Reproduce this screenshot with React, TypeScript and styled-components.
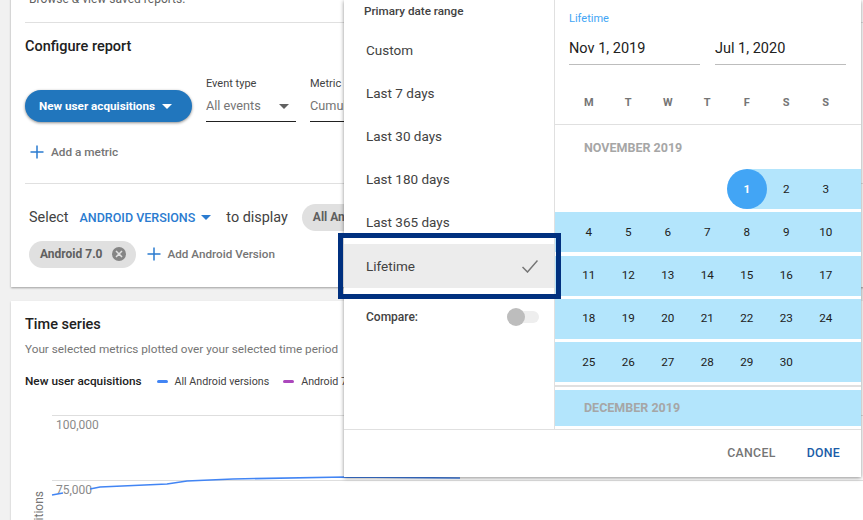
import React from "react";
import styled, { createGlobalStyle } from "styled-components";

const WEEKDAYS = ["M", "T", "W", "T", "F", "S", "S"];
const RANGES = ["Custom", "Last 7 days", "Last 30 days", "Last 180 days", "Last 365 days"];
const WEEKS = [
  [null, null, null, null, 1, 2, 3],
  [4, 5, 6, 7, 8, 9, 10],
  [11, 12, 13, 14, 15, 16, 17],
  [18, 19, 20, 21, 22, 23, 24],
  [25, 26, 27, 28, 29, 30, null],
];

const GlobalStyle = createGlobalStyle`
  html, body {
    margin: 0;
    background: #f1f1f1;
    font-family: Roboto, "Liberation Sans", sans-serif;
  }
`;

const PlusIcon = () => (
  <svg width="14" height="14" viewBox="0 0 14 14" fill="none" stroke="#2a7bd0" strokeWidth="1.5">
    <path d="M7 0.5v13M0.5 7h13" />
  </svg>
);

const Caret: React.FC<{ color: string }> = ({ color }) => (
  <svg width="10" height="5" viewBox="0 0 10 5" fill={color}>
    <path d="M0 0h10L5 5z" />
  </svg>
);

const App: React.FC = () => {
  return (
    <Page>
      <GlobalStyle />
      <TopCard>
        <Intro>Browse &amp; view saved reports.</Intro>
        <CardTitleRow>Configure report</CardTitleRow>
        <MetricRow>
          <MetricButton>
            New user acquisitions
            <Caret color="#ffffff" />
          </MetricButton>
          <Field $width={90}>
            <FieldLabel>Event type</FieldLabel>
            <FieldValue>
              All events
              <Caret color="#616161" />
            </FieldValue>
          </Field>
          <Field $width={120}>
            <FieldLabel>Metric</FieldLabel>
            <FieldValue>Cumulative</FieldValue>
          </Field>
        </MetricRow>
        <AddMetric>
          <PlusIcon />
          Add a metric
        </AddMetric>
        <SectionLine />
        <SelectRow>
          <SelectWord>Select</SelectWord>
          <SelectLink>
            ANDROID VERSIONS
            <Caret color="#2a7bd0" />
          </SelectLink>
          <SelectWord>to display</SelectWord>
          <Chip $marginLeft={14}>All Android versions</Chip>
        </SelectRow>
        <ChipRow>
          <Chip>
            Android 7.0
            <svg width="14" height="14" viewBox="0 0 14 14">
              <circle cx="7" cy="7" r="7" fill="#858585" />
              <path d="M4 4l6 6M10 4l-6 6" stroke="#e0e0e0" strokeWidth="1.5" />
            </svg>
          </Chip>
          <AddVersion>
            <PlusIcon />
            Add Android Version
          </AddVersion>
        </ChipRow>
      </TopCard>

      <ChartCard>
        <ChartTitle>Time series</ChartTitle>
        <ChartSubtitle>Your selected metrics plotted over your selected time period</ChartSubtitle>
        <Legend>
          <LegendName>New user acquisitions</LegendName>
          <LegendItem>
            <LegendDash $color="#4285f4" />
            All Android versions
          </LegendItem>
          <LegendItem>
            <LegendDash $color="#ab47bc" />
            Android 7.0
          </LegendItem>
        </Legend>
        <Chart>
          <AxisLabel>New user acquisitions</AxisLabel>
          <GridRow>
            <GridValue>100,000</GridValue>
          </GridRow>
          <GridRow>
            <GridValue>75,000</GridValue>
          </GridRow>
          <ChartLine width="500" height="80" viewBox="0 0 500 80" fill="none" stroke="#4285f4" strokeWidth="1.5">
            <path d="M0 80L11 78" />
            <path d="M38 74L48 72L115 69L135 66L181 64L293 62L408 63" />
          </ChartLine>
        </Chart>
      </ChartCard>

      <Popup>
        <PopupBody>
          <Menu>
            <MenuTitle>Primary date range</MenuTitle>
            {RANGES.map((range) => (
              <MenuItem key={range}>{range}</MenuItem>
            ))}
            <SelectedItem>
              Lifetime
              <svg width="16" height="13" viewBox="0 0 16 13" fill="none" stroke="#757575" strokeWidth="1.5">
                <path d="M0.5 7L5.5 12L15.5 0.5" />
              </svg>
              <Highlight />
            </SelectedItem>
            <CompareRow>
              Compare:
              <Toggle>
                <ToggleThumb />
              </Toggle>
            </CompareRow>
          </Menu>
          <Calendar>
            <CalendarHead>
              <RangeName>Lifetime</RangeName>
              <Dates>
                <DateField>Nov 1, 2019</DateField>
                <DateField>Jul 1, 2020</DateField>
              </Dates>
            </CalendarHead>
            <Weekdays>
              {WEEKDAYS.map((day, i) => (
                <Weekday key={i}>{day}</Weekday>
              ))}
            </Weekdays>
            <MonthName>NOVEMBER 2019</MonthName>
            <Weeks>
              {WEEKS.map((week, w) => (
                <Week key={w} $bandFrom={w === 0 ? 192 : 0}>
                  {week.map((day, d) =>
                    day === 1 ? (
                      <Day key={d}>
                        <StartDay>{day}</StartDay>
                      </Day>
                    ) : (
                      <Day key={d}>{day}</Day>
                    )
                  )}
                </Week>
              ))}
            </Weeks>
            <MonthLine />
            <NextMonth>DECEMBER 2019</NextMonth>
          </Calendar>
        </PopupBody>
        <PopupFooter>
          <FooterButton $color="#757575">CANCEL</FooterButton>
          <FooterButton $color="#1a5ca8">DONE</FooterButton>
        </PopupFooter>
      </Popup>
    </Page>
  );
};

const Page = styled.div`
  position: relative;
  width: 863px;
  height: 520px;
  overflow: hidden;
  background: #f1f1f1;
  color: #212121;
`;

const TopCard = styled.section`
  margin: -19px 0 0 11px;
  width: 900px;
  height: 306px;
  box-sizing: border-box;
  padding: 0 14px;
  background: #fff;
  box-shadow: 0 1px 2px rgba(0, 0, 0, 0.35);
`;

const Intro = styled.div`
  height: 42px;
  box-sizing: border-box;
  padding: 10px 0 0 4px;
  font-size: 12px;
  line-height: 16px;
  color: #616161;
  border-bottom: 1px solid #e0e0e0;
`;

const CardTitleRow = styled.h2`
  margin: 0;
  height: 46px;
  display: flex;
  align-items: center;
  font-size: 14.5px;
  font-weight: 500;
  color: #212121;
`;

const MetricRow = styled.div`
  margin-top: 8px;
  height: 45px;
  display: flex;
  align-items: flex-end;
`;

const MetricButton = styled.div`
  width: 167px;
  height: 32px;
  box-sizing: border-box;
  padding-left: 14px;
  display: flex;
  align-items: center;
  gap: 7px;
  margin-right: 14px;
  border-radius: 16px;
  background: #2176bd;
  color: #fff;
  font-size: 11.7px;
  font-weight: 700;
  white-space: nowrap;
  box-shadow: 0 1px 3px rgba(0, 0, 0, 0.45);
`;

const Field = styled.div<{ $width: number }>`
  width: ${({ $width }) => $width}px;
  margin-right: 14px;
  border-bottom: 1px solid #212121;
  height: 45px;
  box-sizing: border-box;
`;

const FieldLabel = styled.div`
  font-size: 11px;
  line-height: 13px;
  color: #424242;
`;

const FieldValue = styled.div`
  margin-top: 8px;
  display: flex;
  align-items: center;
  justify-content: space-between;
  padding-right: 7px;
  font-size: 12.7px;
  line-height: 16px;
  color: #757575;
  white-space: nowrap;
`;

const AddMetric = styled.div`
  margin: 20px 0 0 5px;
  height: 20px;
  display: flex;
  align-items: center;
  gap: 7px;
  font-size: 11.8px;
  font-weight: 500;
  color: #757575;
`;

const SectionLine = styled.div`
  margin-top: 21px;
  height: 1px;
  background: #e0e0e0;
`;

const SelectRow = styled.div`
  margin: 20px 0 0 4px;
  height: 27px;
  display: flex;
  align-items: center;
`;

const SelectWord = styled.span`
  margin-top: -1px;
  font-size: 14.4px;
  color: #424242;
`;

const SelectLink = styled.span`
  margin: -1px 15px 0 11px;
  display: flex;
  align-items: center;
  gap: 6px;
  font-size: 12.5px;
  font-weight: 500;
  color: #2a7bd0;
`;

const Chip = styled.div<{ $marginLeft?: number }>`
  margin-left: ${({ $marginLeft }) => $marginLeft ?? 0}px;
  height: 27px;
  box-sizing: border-box;
  padding: 0 10px 1px 11px;
  display: flex;
  align-items: center;
  gap: 9px;
  border-radius: 14px;
  background: #e0e0e0;
  font-size: 12px;
  font-weight: 700;
  color: #5f5f5f;
  white-space: nowrap;
`;

const ChipRow = styled.div`
  margin: 10px 0 0 4px;
  display: flex;
  align-items: center;
`;

const AddVersion = styled.div`
  margin: -2px 0 0 11px;
  display: flex;
  align-items: center;
  gap: 7px;
  font-size: 11.7px;
  font-weight: 500;
  color: #757575;
`;

const ChartCard = styled.section`
  margin: 14px 0 0 11px;
  width: 900px;
  height: 240px;
  box-sizing: border-box;
  padding: 15px 14px 0;
  background: #fff;
  box-shadow: 0 1px 2px rgba(0, 0, 0, 0.2);
`;

const ChartTitle = styled.h2`
  margin: 0;
  font-size: 14.5px;
  line-height: 18px;
  font-weight: 500;
  color: #212121;
`;

const ChartSubtitle = styled.div`
  margin-top: 7px;
  font-size: 11.75px;
  line-height: 16px;
  color: #757575;
`;

const Legend = styled.div`
  margin-top: 16px;
  display: flex;
  align-items: center;
  height: 16px;
  white-space: nowrap;
`;

const LegendName = styled.span`
  margin-right: 15px;
  font-size: 11.8px;
  font-weight: 500;
  color: #212121;
`;

const LegendItem = styled.span`
  margin-right: 14px;
  display: flex;
  align-items: center;
  gap: 7px;
  font-size: 10.7px;
  color: #424242;
`;

const LegendDash = styled.i<{ $color: string }>`
  width: 11px;
  height: 3px;
  border-radius: 2px;
  background: ${({ $color }) => $color};
`;

const Chart = styled.div`
  position: relative;
  margin: 26px 0 0 27px;
`;

const AxisLabel = styled.div`
  position: absolute;
  left: -20px;
  top: 76px;
  writing-mode: vertical-rl;
  transform: rotate(180deg);
  font-size: 12px;
  line-height: 14px;
  color: #757575;
  white-space: nowrap;
`;

const GridRow = styled.div`
  height: 64px;
  border-top: 1px solid #dedede;
  padding-left: 4px;
`;

const GridValue = styled.div`
  padding-top: 1px;
  font-size: 12px;
  line-height: 16px;
  color: #8a8a8a;
`;

const ChartLine = styled.svg`
  position: absolute;
  left: 0;
  top: 0;
  display: block;
  margin-top: 0;
  overflow: visible;
`;

const Popup = styled.div`
  position: absolute;
  left: 344px;
  top: 0;
  width: 517px;
  height: 477px;
  display: flex;
  flex-direction: column;
  background: #fff;
  box-shadow: 0 1px 4px rgba(0, 0, 0, 0.45);
`;

const PopupBody = styled.div`
  height: 429px;
  display: flex;
`;

const Menu = styled.div`
  width: 210px;
  flex-shrink: 0;
  border-right: 1px solid #e0e0e0;
`;

const MenuTitle = styled.div`
  height: 28px;
  box-sizing: border-box;
  padding: 3px 0 0 20px;
  font-size: 11.7px;
  line-height: 16px;
  font-weight: 500;
  color: #424242;
`;

const MenuItem = styled.div`
  height: 43px;
  padding-left: 22px;
  display: flex;
  align-items: center;
  font-size: 13.5px;
  color: #424242;
`;

const SelectedItem = styled(MenuItem)`
  position: relative;
  z-index: 1;
  height: 44px;
  margin-top: 1px;
  padding-right: 16px;
  justify-content: space-between;
  background: #ececec;
`;

const Highlight = styled.div`
  position: absolute;
  left: -6px;
  right: -7px;
  top: -11px;
  bottom: -11px;
  border: 5px solid #00307f;
`;

const CompareRow = styled.div`
  margin-top: 19px;
  height: 20px;
  padding: 0 15px 0 22px;
  display: flex;
  align-items: center;
  justify-content: space-between;
  font-size: 12px;
  font-weight: 500;
  color: #424242;
`;

const Toggle = styled.div`
  position: relative;
  width: 32px;
  height: 12px;
  border-radius: 6px;
  background: #eeeeee;
`;

const ToggleThumb = styled.div`
  position: absolute;
  left: 0;
  top: -3px;
  width: 18px;
  height: 18px;
  border-radius: 50%;
  background: #bdbdbd;
`;

const Calendar = styled.div`
  flex: 1;
  min-width: 0;
  overflow: hidden;
`;

const CalendarHead = styled.div`
  padding: 11px 15px 0 14px;
`;

const RangeName = styled.div`
  font-size: 11px;
  line-height: 16px;
  color: #42a5f5;
`;

const Dates = styled.div`
  margin-top: 11px;
  display: flex;
  gap: 15px;
`;

const DateField = styled.div`
  width: 131px;
  height: 27px;
  box-sizing: border-box;
  padding-top: 1px;
  border-bottom: 1px solid #bdbdbd;
  font-size: 14.5px;
  line-height: 20px;
  color: #212121;
`;

const Weekdays = styled.div`
  margin-top: 30px;
  height: 16px;
  padding: 0 0 13px 14px;
  display: grid;
  grid-template-columns: repeat(7, 39.5px);
  border-bottom: 1px solid #e0e0e0;
`;

const Weekday = styled.div`
  text-align: center;
  font-size: 11px;
  line-height: 16px;
  font-weight: 700;
  color: #757575;
`;

const MonthName = styled.div`
  padding: 15px 0 0 29px;
  font-size: 12.5px;
  line-height: 16px;
  font-weight: 700;
  color: #a6a6a6;
`;

const Weeks = styled.div`
  margin-top: 13px;
  display: flex;
  flex-direction: column;
  gap: 3.25px;
`;

const Week = styled.div<{ $bandFrom: number }>`
  height: 40px;
  padding-left: 14px;
  display: grid;
  grid-template-columns: repeat(7, 39.5px);
  background: linear-gradient(
    90deg,
    transparent ${({ $bandFrom }) => $bandFrom}px,
    #b3e5fc ${({ $bandFrom }) => $bandFrom}px
  );
`;

const Day = styled.div`
  display: flex;
  align-items: center;
  justify-content: center;
  padding-bottom: 1px;
  font-size: 11.7px;
  color: #212121;
`;

const StartDay = styled.span`
  flex-shrink: 0;
  width: 40px;
  height: 40px;
  margin-bottom: -1px;
  display: flex;
  align-items: center;
  justify-content: center;
  border-radius: 50%;
  background: #42a5f5;
  color: #fff;
  font-weight: 700;
`;

const MonthLine = styled.div`
  margin-top: 3px;
  height: 2px;
  background: #e0e0e0;
`;

const NextMonth = styled.div`
  margin-top: 3px;
  height: 36px;
  box-sizing: border-box;
  padding: 0 0 2px 29px;
  display: flex;
  align-items: center;
  background: #b3e5fc;
  font-size: 12.5px;
  font-weight: 700;
  color: #a6a6a6;
`;

const PopupFooter = styled.div`
  flex: 1;
  padding: 0 21px 2px 0;
  display: flex;
  align-items: center;
  justify-content: flex-end;
  gap: 31px;
  border-top: 1px solid #e0e0e0;
`;

const FooterButton = styled.span<{ $color: string }>`
  font-size: 12.3px;
  font-weight: 500;
  letter-spacing: 0.3px;
  color: ${({ $color }) => $color};
`;

export default App;
